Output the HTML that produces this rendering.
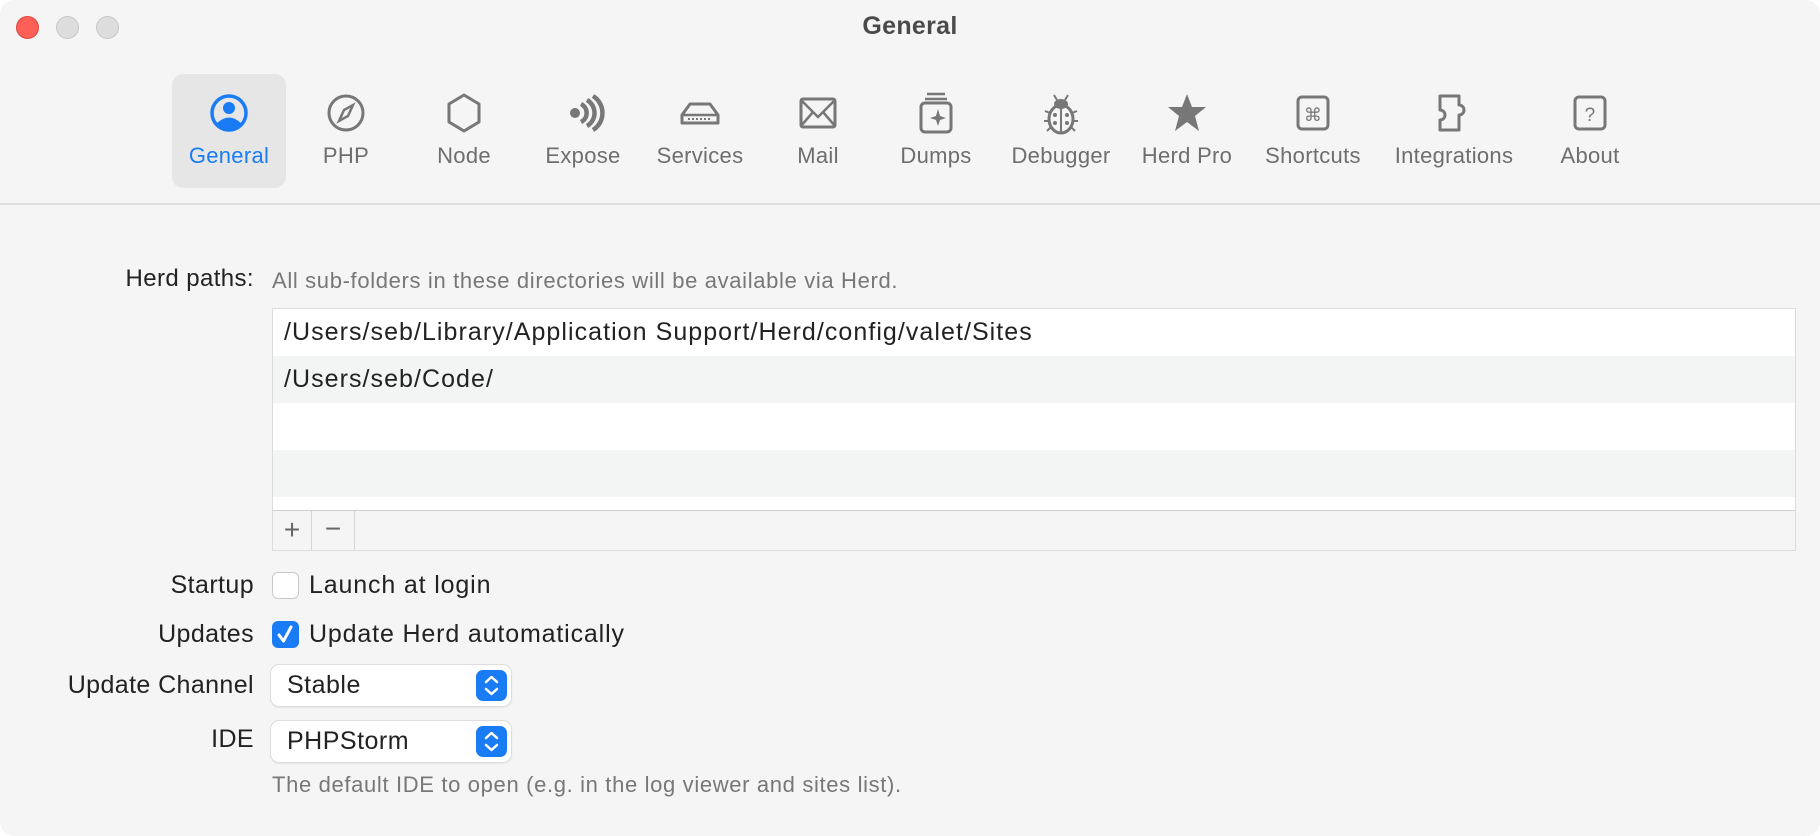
<!DOCTYPE html>
<html><head><meta charset="utf-8"><style>
*{margin:0;padding:0;box-sizing:border-box}
body{width:1820px;height:836px;background:#fff;font-family:"Liberation Sans",sans-serif;overflow:hidden}
.win{position:absolute;left:0;top:0;width:1820px;height:836px;background:#f5f5f5;border-radius:14px;overflow:hidden}
.tl{position:absolute;top:16px;width:23px;height:23px;border-radius:50%;background:#ddd;border:1px solid #c8c8c8}
.title{position:absolute;top:12px;left:0;width:1820px;text-align:center;font-weight:bold;font-size:25px;letter-spacing:0.3px;color:#4a4a4a}
.sel{position:absolute;left:172px;top:74px;width:114px;height:114px;border-radius:11px;background:#e6e6e6}
.it{position:absolute;top:91px;width:180px;margin-left:-90px;text-align:center;color:#6e6e6e;font-size:22px;letter-spacing:0.3px}
.it svg{display:block;margin:0 auto 8px;width:44px;height:44px}
.sep{position:absolute;left:0;top:203px;width:1820px;height:2px;background:#dedede}
.lab{position:absolute;right:1566px;font-size:25px;letter-spacing:0.4px;color:#222;white-space:nowrap}
.tbl{position:absolute;left:272px;top:308px;width:1524px;height:243px;border:1px solid #dcdcdc;background:#fff}
.row{height:47px;font-size:25px;letter-spacing:1.05px;color:#222;padding-left:11px;line-height:47px;white-space:nowrap}
.g{background:#f3f4f4}
.bar{position:absolute;left:0;bottom:0;width:100%;height:40px;border-top:1px solid #cfcfcf;background:#f5f5f5}
.cb{position:absolute;left:272px;width:27px;height:27px;border-radius:6px;border:1px solid #c9c9c9;background:#fff}
.txt{position:absolute;left:309px;font-size:25px;letter-spacing:0.85px;color:#222;white-space:nowrap}
.pop{position:absolute;left:271px;width:240px;height:41px;background:#fff;border-radius:8px;box-shadow:0 0 0 1px #ddd,0 1px 2px rgba(0,0,0,.15);font-size:25px;letter-spacing:0.5px;color:#222;padding-left:16px;line-height:41px}
.st{position:absolute;right:4px;top:5px;width:31px;height:31px;border-radius:7px;background:#1a7cf5}
.desc{position:absolute;left:272px;font-size:22px;letter-spacing:0.65px;color:#777;white-space:nowrap}
</style></head><body><div class="win">
<div class="tl" style="left:16px;background:#fe5f57;border-color:#e0443e"></div>
<div class="tl" style="left:56px"></div>
<div class="tl" style="left:96px"></div>
<div class="title">General</div>
<div class="sel"></div>
<div class="it" style="left:229px;color:#1a7cf5"><svg viewBox="0 0 44 44"><circle cx="22" cy="22" r="17" fill="none" stroke="#1a7cf5" stroke-width="3.5"/><circle cx="22" cy="17" r="6" fill="#1a7cf5"/><path d="M9 33 Q22 20 35 33 Q22 44 9 33Z" fill="#1a7cf5"/></svg>General</div>
<div class="it" style="left:346px"><svg viewBox="0 0 44 44"><circle cx="22" cy="22" r="17" fill="none" stroke="#777" stroke-width="3"/><path d="M29 14 L24 25 L15 30 L20 19Z" fill="none" stroke="#777" stroke-width="2.5"/></svg>PHP</div>
<div class="it" style="left:464px"><svg viewBox="0 0 44 44"><path d="M22 4 L37 13 L37 31 L22 40 L7 31 L7 13Z" fill="none" stroke="#777" stroke-width="3" stroke-linejoin="round"/></svg>Node</div>
<div class="it" style="left:583px"><svg viewBox="0 0 44 44"><circle cx="14" cy="22" r="5" fill="#777"/><path d="M20 13 A10 10 0 0 1 20 31M26 9 A15 15 0 0 1 26 35M32 5 A20 20 0 0 1 32 39" fill="none" stroke="#777" stroke-width="4.5"/></svg>Expose</div>
<div class="it" style="left:700px"><svg viewBox="0 0 44 44"><path d="M12 13 H32 L40 24 V32 H4 V24Z" fill="none" stroke="#777" stroke-width="3" stroke-linejoin="round"/><line x1="5" y1="24" x2="39" y2="24" stroke="#777" stroke-width="2.5"/><path d="M10 28 H34" stroke="#777" stroke-width="2" stroke-dasharray="2 2"/></svg>Services</div>
<div class="it" style="left:818px"><svg viewBox="0 0 44 44"><rect x="5" y="8" width="34" height="28" rx="2" fill="none" stroke="#777" stroke-width="3"/><path d="M5 9 L22 26 L39 9M5 35 L17 21M39 35 L27 21" fill="none" stroke="#777" stroke-width="2.5"/></svg>Mail</div>
<div class="it" style="left:936px"><svg viewBox="0 0 44 44"><path d="M13 3H31M11 8H33" stroke="#777" stroke-width="2.5"/><rect x="7" y="12" width="30" height="29" rx="4" fill="none" stroke="#777" stroke-width="3"/><path d="M24 18 L26 25 L32 27 L26 29 L24 35 L22 29 L16 27 L22 25Z" fill="#777"/></svg>Dumps</div>
<div class="it" style="left:1061px"><svg viewBox="0 0 44 44"><path d="M15 4 L18 9M29 4 L26 9M6 20 L11 22M38 20 L33 22M5 30 H10M39 30 H34M8 40 L12 36M36 40 L32 36" stroke="#777" stroke-width="2"/><ellipse cx="22" cy="13" rx="7" ry="5" fill="#777"/><ellipse cx="22" cy="28" rx="12" ry="14" fill="none" stroke="#777" stroke-width="3"/><line x1="22" y1="17" x2="22" y2="42" stroke="#777" stroke-width="2"/><g fill="#777"><circle cx="16" cy="24" r="2"/><circle cx="28" cy="24" r="2"/><circle cx="16" cy="32" r="2"/><circle cx="28" cy="32" r="2"/></g></svg>Debugger</div>
<div class="it" style="left:1187px"><svg viewBox="0 0 44 44"><path d="M22 3 L27 16 L41 16 L30 25 L34 40 L22 31 L10 40 L14 25 L3 16 L17 16Z" fill="#777"/></svg>Herd Pro</div>
<div class="it" style="left:1313px"><svg viewBox="0 0 44 44"><rect x="7" y="6" width="30" height="32" rx="4" fill="none" stroke="#777" stroke-width="3"/><text x="22" y="30" font-size="18" text-anchor="middle" fill="#777" font-family="DejaVu Sans">⌘</text></svg>Shortcuts</div>
<div class="it" style="left:1454px"><svg viewBox="0 0 44 44"><path d="M8 5 H27 V14 A4 4 0 1 1 27 24 V39 H8 V29 A4 4 0 1 0 8 19Z" fill="none" stroke="#777" stroke-width="3" stroke-linejoin="round"/></svg>Integrations</div>
<div class="it" style="left:1590px"><svg viewBox="0 0 44 44"><rect x="7" y="6" width="30" height="32" rx="4" fill="none" stroke="#777" stroke-width="3"/><text x="22" y="30" font-size="19" text-anchor="middle" fill="#777">?</text></svg>About</div>
<div class="sep"></div>

<div class="lab" style="top:265px;font-size:24px">Herd paths:</div>
<div class="desc" style="top:268px">All sub-folders in these directories will be available via Herd.</div>
<div class="tbl">
<div class="row">/Users/seb/Library/Application Support/Herd/config/valet/Sites</div>
<div class="row g">/Users/seb/Code/</div>
<div class="row"></div>
<div class="row g"></div>
<div class="bar">
<div style="position:absolute;left:0;top:0;width:39px;height:39px;border-right:1px solid #d5d5d5;text-align:center;font-size:28px;line-height:38px;color:#666">+</div>
<div style="position:absolute;left:39px;top:0;width:43px;height:39px;border-right:1px solid #d5d5d5;text-align:center;font-size:28px;line-height:36px;color:#666">−</div>
</div></div>

<div class="lab" style="top:571px">Startup</div>
<div class="cb" style="top:572px"></div>
<div class="txt" style="top:571px">Launch at login</div>
<div class="lab" style="top:620px">Updates</div>
<div class="cb" style="top:621px;background:#1a7cf5;border-color:#1a7cf5"><svg width="27" height="27" viewBox="0 0 27 27" style="position:absolute;left:-1px;top:-1px"><path d="M7 14 L11.5 20 L19 6" fill="none" stroke="#fff" stroke-width="3" stroke-linecap="round" stroke-linejoin="round"/></svg></div>
<div class="txt" style="top:620px">Update Herd automatically</div>
<div class="lab" style="top:671px">Update Channel</div>
<div class="pop" style="top:665px">Stable<div class="st"><svg width="31" height="31" viewBox="0 0 31 31"><path d="M10 12 L15.5 7 L21 12M10 19 L15.5 24 L21 19" fill="none" stroke="#fff" stroke-width="2.5" stroke-linecap="round" stroke-linejoin="round"/></svg></div></div>
<div class="lab" style="top:725px">IDE</div>
<div class="pop" style="top:721px">PHPStorm<div class="st"><svg width="31" height="31" viewBox="0 0 31 31"><path d="M10 12 L15.5 7 L21 12M10 19 L15.5 24 L21 19" fill="none" stroke="#fff" stroke-width="2.5" stroke-linecap="round" stroke-linejoin="round"/></svg></div></div>
<div class="desc" style="top:772px">The default IDE to open (e.g. in the log viewer and sites list).</div>
</div></body></html>
